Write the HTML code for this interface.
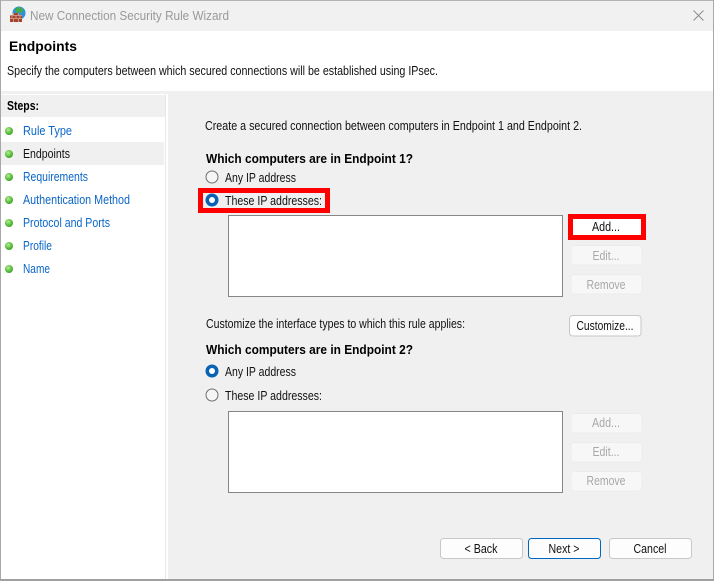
<!DOCTYPE html>
<html><head><meta charset="utf-8"><style>
html,body{margin:0;padding:0;width:714px;height:581px;overflow:hidden;background:#fff}
svg{display:block}
text{font-family:"Liberation Sans",sans-serif;font-size:12.5px;fill:#111}
.l{fill:#0a66c8}.d{fill:#a8a8a8}.b{font-weight:bold;fill:#000}
.t{text-anchor:middle}
</style></head><body>
<svg width="714" height="581" viewBox="0 0 714 581" xmlns="http://www.w3.org/2000/svg">
<defs><radialGradient id="g" cx=".4" cy=".35" r=".7"><stop offset="0" stop-color="#b5ec9a"/><stop offset=".6" stop-color="#5cc03c"/><stop offset="1" stop-color="#3a9a2a"/></radialGradient></defs>
<rect width="714" height="581" fill="#fff"/>
<rect x="1" y="1" width="712" height="30" fill="#f1f1f1"/>
<rect x="0" y="0" width="714" height="1" fill="#b4b4b4"/>
<rect x="1" y="91" width="712" height="3" fill="#f0f0f0"/>
<rect x="1" y="95" width="164" height="22" fill="#f0f0f0"/>
<rect x="165" y="94" width="1" height="486" fill="#e8e8e8"/>
<rect x="168" y="94" width="545" height="485" fill="#f0f0f0"/>
<rect x="1" y="142" width="163" height="23" fill="#f0f0f0"/>
<rect x="0" y="0" width="1" height="581" fill="#a8a8a8"/>
<rect x="713" y="0" width="1" height="581" fill="#a8a8a8"/>
<rect x="0" y="579" width="714" height="2" fill="#a0a0a0"/>

<!-- app icon -->
<circle cx="19" cy="13" r="6.500" fill="#2f8fd8"/>
<path d="M15 9.500l4-3 4.500 3-2 3.500-3-1-2 1.500z" fill="#3fae48"/>
<path d="M10 15h3v-2h6v2h3v7H10z" fill="#a5432f"/>
<path d="M10 15.500h12M10 18.500h12M13.500 13v2.500M18.500 13v2.500M12 15.500v3M16 15.500v3M20 15.500v3M13.500 18.500v3.500M18.500 18.500v3.500" stroke="#d8a898" stroke-width=".8" fill="none"/>

<text x="30" y="20" class="d" style="fill:#999" textLength="199" lengthAdjust="spacingAndGlyphs">New Connection Security Rule Wizard</text>
<path d="M693.500 10.500l10 10M703.500 10.500l-10 10" stroke="#8c8c8c" stroke-width="1" fill="none"/>

<text x="9" y="51" class="b" style="font-size:13.500px" textLength="68" lengthAdjust="spacingAndGlyphs">Endpoints</text>
<text x="7" y="75" textLength="431" lengthAdjust="spacingAndGlyphs">Specify the computers between which secured connections will be established using IPsec.</text>

<text x="7" y="110" class="b" textLength="32" lengthAdjust="spacingAndGlyphs">Steps:</text>
<g fill="url(#g)">
<circle cx="9" cy="131" r="4"/><circle cx="9" cy="154" r="4"/><circle cx="9" cy="177" r="4"/><circle cx="9" cy="200" r="4"/><circle cx="9" cy="223" r="4"/><circle cx="9" cy="246" r="4"/><circle cx="9" cy="269" r="4"/>
</g>
<text x="23" y="135" class="l" textLength="49" lengthAdjust="spacingAndGlyphs">Rule Type</text>
<text x="23" y="158" textLength="47" lengthAdjust="spacingAndGlyphs">Endpoints</text>
<text x="23" y="181" class="l" textLength="65" lengthAdjust="spacingAndGlyphs">Requirements</text>
<text x="23" y="204" class="l" textLength="107" lengthAdjust="spacingAndGlyphs">Authentication Method</text>
<text x="23" y="227" class="l" textLength="87" lengthAdjust="spacingAndGlyphs">Protocol and Ports</text>
<text x="23" y="250" class="l" textLength="29" lengthAdjust="spacingAndGlyphs">Profile</text>
<text x="23" y="273" class="l" textLength="27" lengthAdjust="spacingAndGlyphs">Name</text>

<text x="205" y="130" textLength="377" lengthAdjust="spacingAndGlyphs">Create a secured connection between computers in Endpoint 1 and Endpoint 2.</text>
<text x="206" y="163" class="b" textLength="207" lengthAdjust="spacingAndGlyphs">Which computers are in Endpoint 1?</text>

<rect x="200.500" y="190.500" width="127" height="20" fill="none" stroke="#f00" stroke-width="5"/>
<circle cx="212" cy="177" r="6" fill="#f6f6f6" stroke="#6e6e6e"/>
<circle cx="212" cy="200" r="6.500" fill="#0a62b4"/><circle cx="212" cy="200" r="3" fill="#fff"/>
<text x="225" y="182" textLength="71" lengthAdjust="spacingAndGlyphs">Any IP address</text>
<text x="225" y="205" textLength="97" lengthAdjust="spacingAndGlyphs">These IP addresses:</text>

<rect x="228.500" y="215.500" width="334" height="81" fill="#fff" stroke="#868686"/>

<rect x="570.500" y="216.500" width="73" height="21" fill="#fff" stroke="#f00" stroke-width="5"/>
<text x="606" y="231" class="t" textLength="28" lengthAdjust="spacingAndGlyphs">Add...</text>
<rect x="571" y="245.500" width="71" height="19.500" rx="3" fill="#f7f7f7" stroke="#ececec"/>
<text x="606" y="260" class="t d" textLength="27" lengthAdjust="spacingAndGlyphs">Edit...</text>
<rect x="571" y="274.500" width="71" height="19.500" rx="3" fill="#f7f7f7" stroke="#ececec"/>
<text x="606" y="289" class="t d" textLength="39" lengthAdjust="spacingAndGlyphs">Remove</text>

<text x="206" y="328" textLength="259" lengthAdjust="spacingAndGlyphs">Customize the interface types to which this rule applies:</text>
<rect x="569.500" y="315.500" width="71.500" height="20.500" rx="3" fill="#fdfdfd" stroke="#c8c8c8"/>
<text x="605" y="330" class="t" textLength="57" lengthAdjust="spacingAndGlyphs">Customize...</text>

<text x="206" y="354" class="b" textLength="207" lengthAdjust="spacingAndGlyphs">Which computers are in Endpoint 2?</text>
<circle cx="212" cy="371" r="6.500" fill="#0a62b4"/><circle cx="212" cy="371" r="3" fill="#fff"/>
<circle cx="212" cy="395" r="6" fill="#f6f6f6" stroke="#6e6e6e"/>
<text x="225" y="376" textLength="71" lengthAdjust="spacingAndGlyphs">Any IP address</text>
<text x="225" y="400" textLength="97" lengthAdjust="spacingAndGlyphs">These IP addresses:</text>

<rect x="228.500" y="411.500" width="334" height="81" fill="#fff" stroke="#868686"/>
<rect x="571" y="413.500" width="71" height="19.500" rx="3" fill="#f7f7f7" stroke="#ececec"/>
<text x="606" y="427" class="t d" textLength="28" lengthAdjust="spacingAndGlyphs">Add...</text>
<rect x="571" y="442.500" width="71" height="19.500" rx="3" fill="#f7f7f7" stroke="#ececec"/>
<text x="606" y="456" class="t d" textLength="27" lengthAdjust="spacingAndGlyphs">Edit...</text>
<rect x="571" y="471.500" width="71" height="19.500" rx="3" fill="#f7f7f7" stroke="#ececec"/>
<text x="606" y="485" class="t d" textLength="39" lengthAdjust="spacingAndGlyphs">Remove</text>

<rect x="440.500" y="538.500" width="82" height="20" rx="3" fill="#fdfdfd" stroke="#c8c8c8"/>
<text x="481" y="553" class="t" textLength="33" lengthAdjust="spacingAndGlyphs">&lt; Back</text>
<rect x="528.500" y="538.500" width="72" height="20" rx="3" fill="#fdfdfd" stroke="#0067c0"/>
<text x="564" y="553" class="t" textLength="31" lengthAdjust="spacingAndGlyphs">Next &gt;</text>
<rect x="609.500" y="538.500" width="82" height="20" rx="3" fill="#fdfdfd" stroke="#c8c8c8"/>
<text x="650" y="553" class="t" textLength="33" lengthAdjust="spacingAndGlyphs">Cancel</text>
</svg>
</body></html>
